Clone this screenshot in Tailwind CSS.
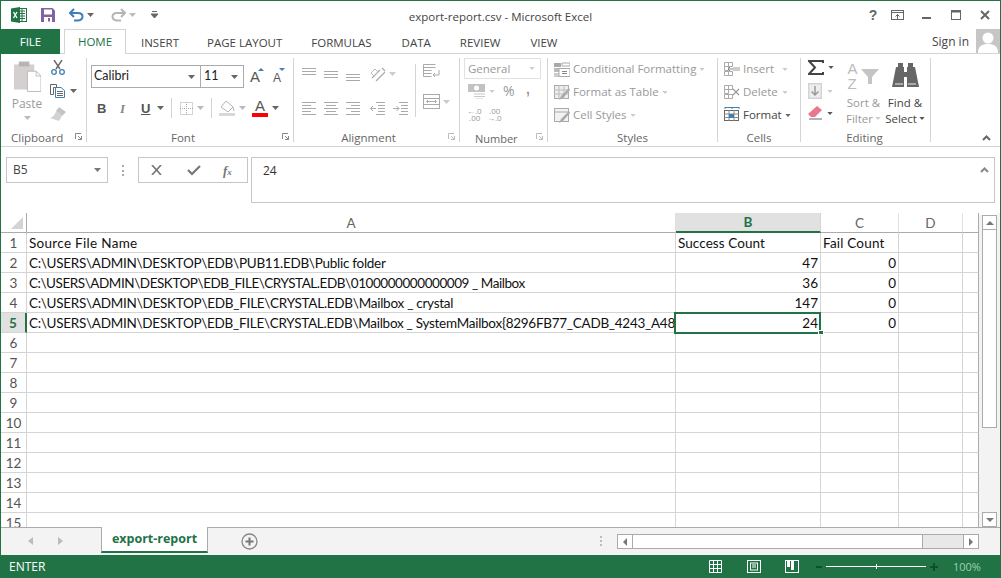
<!DOCTYPE html>
<html><head><meta charset="utf-8"><title>export-report.csv - Microsoft Excel</title>
<script src="https://cdn.jsdelivr.net/npm/@tailwindcss/browser@4"></script></head>
<body class="m-0 overflow-hidden bg-white">
<div class="w-[1001px] h-[578px] flex flex-col overflow-hidden bg-white border-x border-t border-[#217346] font-['Open_Sans',sans-serif] text-[11.5px] text-[#444] leading-none">

<!-- title bar -->
<div class="h-[28px] shrink-0 relative flex items-center">
  <svg class="ml-[10px] w-[16px] h-[16px]" viewBox="0 0 16 16"><rect x="6" y="1.500" width="9.500" height="13" fill="#fff" stroke="#217346"/><path d="M9 4h5M9 6.500h5M9 9h5M9 11.500h5M11 2v12" stroke="#217346" fill="none"/><path d="M0 1.500L9 0v16L0 14.500z" fill="#217346"/><path d="M2.500 5l3.500 6M6 5l-3.500 6" stroke="#fff" stroke-width="1.300" fill="none"/></svg>
  <svg class="ml-[14px] w-[14px] h-[14px]" viewBox="0 0 14 14"><path d="M0 0h11.500L14 2.500V14H0z" fill="#8064a2"/><rect x="3" y="1.500" width="8" height="5" fill="#fff"/><rect x="3" y="9" width="8" height="5" fill="#fff"/><rect x="7" y="10" width="2" height="3.500" fill="#8064a2"/></svg>
  <svg class="ml-[14px] w-[15px] h-[14px]" viewBox="0 0 15 14"><path d="M5 1L1 5l4 4" fill="none" stroke="#3f7fb5" stroke-width="2"/><path d="M1.500 5H9c6 0 6 7 0 7.500H5" fill="none" stroke="#3f7fb5" stroke-width="2"/></svg>
  <svg class="ml-[3px] w-[7px] h-[4px]" viewBox="0 0 7 4"><path d="M0 0h7L3.500 4z" fill="#666"/></svg>
  <svg class="ml-[17px] w-[15px] h-[14px]" viewBox="0 0 15 14"><path d="M10 1l4 4-4 4" fill="none" stroke="#b5b5b5" stroke-width="2"/><path d="M13.500 5H6c-6 0-6 7 0 7.500h4" fill="none" stroke="#b5b5b5" stroke-width="2"/></svg>
  <svg class="ml-[3px] w-[7px] h-[4px]" viewBox="0 0 7 4"><path d="M0 0h7L3.500 4z" fill="#bbb"/></svg>
  <svg class="ml-[15px] w-[7px] h-[8px]" viewBox="0 0 7 8"><path d="M1 .5h5M0 3h7L3.500 7z" stroke="#666" stroke-width="1" fill="#666"/></svg>
  <div class="absolute left-0 w-full text-center text-[11.5px] text-[#444] top-[10px]">export-report.csv - Microsoft Excel</div>
  <div class="ml-auto flex items-center">
    <span class="font-bold text-[14px] text-[#666] w-[10px] text-center font-['Liberation_Sans']">?</span>
    <svg class="ml-[13px] w-[13px] h-[10px]" viewBox="0 0 13 10"><rect x=".5" y=".5" width="12" height="9" fill="none" stroke="#666"/><path d="M.5 2.500h12M6.500 9V4.500M4.500 6.500l2-2 2 2" stroke="#666" fill="none"/></svg>
    <div class="ml-[18px] w-[9px] h-[2px] bg-[#666] mt-[5px]"></div>
    <svg class="ml-[20px] w-[10px] h-[10px]" viewBox="0 0 10 10"><rect x=".5" y=".5" width="9" height="9" fill="none" stroke="#666"/><path d="M0 1.500h10" stroke="#666" stroke-width="2"/></svg>
    <svg class="ml-[19px] mr-[10px] w-[10px] h-[10px]" viewBox="0 0 10 10"><path d="M1 1l8 8M9 1l-8 8" stroke="#666" stroke-width="2"/></svg>
  </div>
</div>

<!-- tabs -->
<div class="h-[25px] shrink-0 flex border-b border-[#d4d4d4] text-[11.5px]">
  <div class="w-[59px] h-[25px] bg-[#217346] text-white flex items-center justify-center">FILE</div>
  <div class="ml-[4px] w-[62px] h-[25px] bg-white border border-b-0 border-[#d4d4d4] text-[#217346] flex items-center justify-center">HOME</div>
  <div class="ml-[15px] pt-[8px]">INSERT</div>
  <div class="ml-[28px] pt-[8px]">PAGE LAYOUT</div>
  <div class="ml-[29px] pt-[8px]">FORMULAS</div>
  <div class="ml-[30px] pt-[8px]">DATA</div>
  <div class="ml-[29px] pt-[8px]">REVIEW</div>
  <div class="ml-[30px] pt-[8px]">VIEW</div>
  <div class="ml-auto pt-[7px] text-[12px]">Sign in</div>
  <svg class="ml-[7px] w-[24px] h-[24px]" viewBox="0 0 24 24"><rect width="24" height="24" fill="#c6c6c6"/><circle cx="12" cy="9" r="5.500" fill="#fff"/><path d="M2 24c0-7 4-9 10-9s10 2 10 9z" fill="#fff"/></svg>
</div>

<!-- ribbon -->
<div class="h-[93px] shrink-0 flex pt-[4px] border-b border-[#d4d4d4] relative">

  <!-- Clipboard -->
  <div class="w-[86px] h-[84px] border-r border-[#d4d4d4] flex flex-col">
    <div class="h-[72px] shrink-0 flex">
      <div class="w-[49px] flex flex-col items-center pl-[3px] text-[#9a9a9a]">
        <svg class="mt-[3px] w-[28px] h-[31px]" viewBox="0 0 29 31"><path d="M1 3h21v26H1z" fill="#d4d0d0"/><rect x="6" y="0" width="11" height="5" fill="#b8b4b4"/><path d="M15 10h9l5 5v16H15z" fill="#fff" stroke="#bbb"/><path d="M24 10v5h5" fill="none" stroke="#bbb"/></svg>
        <span class="mt-[6px] text-[12px]">Paste</span>
        <svg class="mt-[6px] w-[7px] h-[4px]" viewBox="0 0 7 4"><path d="M0 0h7L3.500 4z" fill="#bbb"/></svg>
      </div>
      <div class="flex flex-col">
        <svg class="ml-[1px] mt-[2px] w-[14px] h-[15px]" viewBox="0 0 14 15"><path d="M3 0l6 9M11 0L5 9" stroke="#666" stroke-width="1.400"/><circle cx="3" cy="12" r="2.300" fill="none" stroke="#3f7fb5" stroke-width="1.300"/><circle cx="11" cy="12" r="2.300" fill="none" stroke="#3f7fb5" stroke-width="1.300"/></svg>
        <div class="flex items-center mt-[9px]">
          <svg class="w-[15px] h-[14px]" viewBox="0 0 15 14"><path d="M.5.500h6v3h-3v7h-3z" fill="#fff" stroke="#666"/><path d="M5.500 3.500H11l3.500 3v7h-9z" fill="#fff" stroke="#3f7fb5"/><path d="M7 7.500h6M7 9.500h6M7 11.500h6" stroke="#666"/></svg>
          <svg class="ml-[5px] w-[7px] h-[4px]" viewBox="0 0 7 4"><path d="M0 0h7L3.500 4z" fill="#666"/></svg>
        </div>
        <svg class="mt-[9px] w-[16px] h-[14px]" viewBox="0 0 16 14"><path d="M9 0l7 5-4 4-6-5z" fill="#c4c4c4"/><path d="M6 4l6 5-3 5-9-3c3-1 5-3 6-7z" fill="#d2d2d2"/></svg>
      </div>
    </div>
    <div class="h-[16px] shrink-0 flex items-center relative"><span class="ml-[10px] text-[#666]">Clipboard</span><svg class="absolute left-[74px] top-[3px] w-[7px] h-[7px]" viewBox="0 0 7 7"><path d="M.5 6V.5H6M3 3l3.500 3.500M6.500 3v3.500H3" fill="none" stroke="#888"/></svg></div>
  </div>

  <!-- Font -->
  <div class="w-[207px] h-[84px] border-r border-[#d4d4d4] flex flex-col">
    <div class="h-[72px] shrink-0">
      <div class="flex items-start mt-[7px] ml-[4px] h-[23px]">
        <div class="w-[110px] h-[23px] border border-[#ababab] flex items-center pl-[2px] font-['Lato'] text-[12.5px] text-[#222]">Calibri<svg class="ml-auto mr-[5px] w-[7px] h-[4px]" viewBox="0 0 7 4"><path d="M0 0h7L3.500 4z" fill="#666"/></svg></div>
        <div class="w-[43px] h-[23px] border border-l-0 border-[#ababab] flex items-center pl-[3px] font-['Lato'] text-[12.5px] text-[#222]">11<svg class="ml-auto mr-[5px] w-[7px] h-[4px]" viewBox="0 0 7 4"><path d="M0 0h7L3.500 4z" fill="#666"/></svg></div>
        <div class="ml-[6px] w-[14px] mt-[3px] h-[16px] flex items-end text-[15px] text-[#555] font-['Liberation_Sans'] relative">A<svg class="absolute left-[8px] top-[0px] w-[6px] h-[3px]" viewBox="0 0 6 3"><path d="M0 3h6L3 0z" fill="#3f7fb5"/></svg></div>
        <div class="ml-[9px] w-[11px] mt-[3px] h-[16px] flex items-end text-[12px] text-[#555] font-['Liberation_Sans'] relative">A<svg class="absolute left-[6px] top-[0px] w-[6px] h-[3px]" viewBox="0 0 6 3"><path d="M0 0h6L3 3z" fill="#3f7fb5"/></svg></div>
      </div>
      <div class="flex items-center mt-[10px] h-[20px] text-[#555]">
        <span class="ml-[10px] w-[9px] font-bold text-[13px] font-['Liberation_Sans']">B</span>
        <span class="ml-[14px] w-[8px] italic text-[13px] font-['Liberation_Serif'] font-bold text-[#888]">I</span>
        <span class="ml-[13px] w-[9px] underline font-bold text-[13px] font-['Liberation_Sans']">U</span>
        <svg class="ml-[7px] w-[7px] h-[4px]" viewBox="0 0 7 4"><path d="M0 0h7L3.500 4z" fill="#666"/></svg>
        <div class="ml-[7px] w-px h-[20px] bg-[#d4d4d4]"></div>
        <svg class="ml-[8px] w-[13px] h-[13px]" viewBox="0 0 13 13"><rect x=".5" y=".5" width="12" height="12" fill="none" stroke="#aaa" stroke-dasharray="1 1"/><path d="M6.500 0v13M0 6.500h13" stroke="#aaa" stroke-dasharray="1 1"/></svg>
        <svg class="ml-[4px] w-[7px] h-[4px]" viewBox="0 0 7 4"><path d="M0 0h7L3.500 4z" fill="#bbb"/></svg>
        <div class="ml-[7px] w-px h-[20px] bg-[#d4d4d4]"></div>
        <svg class="ml-[7px] w-[16px] h-[15px]" viewBox="0 0 16 15"><path d="M7 0l7 6-5 5-7-5z" fill="#fff" stroke="#b5b5b5"/><path d="M14 6l1 4" stroke="#b5b5b5"/><rect x="0" y="12" width="16" height="3" fill="#d8d8d8"/></svg>
        <svg class="ml-[4px] w-[7px] h-[4px]" viewBox="0 0 7 4"><path d="M0 0h7L3.500 4z" fill="#bbb"/></svg>
        <div class="ml-[6px] w-[16px] h-[18px] flex flex-col items-center"><span class="text-[15px] leading-[14px] font-['Liberation_Sans'] text-[#555]">A</span><div class="w-[16px] h-[4px] bg-[#f00] mt-[0px]"></div></div>
        <svg class="ml-[4px] w-[7px] h-[4px]" viewBox="0 0 7 4"><path d="M0 0h7L3.500 4z" fill="#666"/></svg>
      </div>
    </div>
    <div class="h-[16px] shrink-0 flex items-center justify-center relative text-[#666]"><span class="pr-[14px]">Font</span><svg class="absolute left-[195px] top-[3px] w-[7px] h-[7px]" viewBox="0 0 7 7"><path d="M.5 6V.5H6M3 3l3.500 3.500M6.500 3v3.500H3" fill="none" stroke="#888"/></svg></div>
  </div>

  <!-- Alignment -->
  <div class="w-[166px] h-[84px] border-r border-[#d4d4d4] flex flex-col">
    <div class="h-[72px] shrink-0 flex">
      <div class="flex flex-col">
        <div class="flex items-center mt-[8px] ml-[8px] h-[16px]">
          <svg class="w-[14px] h-[13px]" viewBox="0 0 14 13"><path d="M0 .5h14M0 3.500h14M0 6.500h14" stroke="#aaa"/></svg>
          <svg class="ml-[8px] w-[14px] h-[13px]" viewBox="0 0 14 13"><path d="M0 3.500h14M0 6.500h14M0 9.500h14" stroke="#aaa"/></svg>
          <svg class="ml-[8px] w-[14px] h-[13px]" viewBox="0 0 14 13"><path d="M0 6.500h14M0 9.500h14M0 12.500h14" stroke="#aaa"/></svg>
          <svg class="ml-[10px] w-[16px] h-[15px]" viewBox="0 0 16 15"><path d="M2 11l8-8M6 14l9-9M12 1l3 3" stroke="#aaa" fill="none" stroke-width="1.200"/><path d="M1 6l4-4 3 3-4 4z" fill="none" stroke="#bbb"/></svg>
          <svg class="ml-[3px] w-[7px] h-[4px]" viewBox="0 0 7 4"><path d="M0 0h7L3.500 4z" fill="#ccc"/></svg>
        </div>
        <div class="flex items-center mt-[18px] ml-[8px] h-[16px]">
          <svg class="w-[14px] h-[13px]" viewBox="0 0 14 13"><path d="M0 .5h14M0 3.500h9M0 6.500h14M0 9.500h9M0 12.500h14" stroke="#aaa"/></svg>
          <svg class="ml-[8px] w-[14px] h-[13px]" viewBox="0 0 14 13"><path d="M0 .5h14M2 3.500h10M0 6.500h14M2 9.500h10M0 12.500h14" stroke="#aaa"/></svg>
          <svg class="ml-[8px] w-[14px] h-[13px]" viewBox="0 0 14 13"><path d="M0 .5h14M5 3.500h9M0 6.500h14M5 9.500h9M0 12.500h14" stroke="#aaa"/></svg>
          <svg class="ml-[10px] w-[15px] h-[13px]" viewBox="0 0 15 13"><path d="M6 .5h9M8 3.500h7M8 6.500h7M8 9.500h7M6 12.500h9M0 6.500h6M3 4L.5 6.500 3 9" stroke="#aaa" fill="none"/></svg>
          <svg class="ml-[8px] w-[15px] h-[13px]" viewBox="0 0 15 13"><path d="M6 .5h9M8 3.500h7M8 6.500h7M8 9.500h7M6 12.500h9M0 6.500h6M3.500 4L6 6.500 3.500 9" stroke="#aaa" fill="none"/></svg>
        </div>
      </div>
      <div class="ml-[7px] mt-[6px] w-px h-[53px] bg-[#d4d4d4]"></div>
      <div class="ml-[7px] flex flex-col">
        <svg class="mt-[6px] w-[17px] h-[18px]" viewBox="0 0 17 18"><path d="M.5.500h12M.5 3.500h12M.500 6.500h8M.5 9.500h8M.5 12.500h8M.5.5v12" stroke="#aaa" fill="none"/><path d="M16 6v5h-6M12 9l-2 2 2 2" stroke="#aaa" fill="none"/></svg>
        <div class="flex items-center mt-[12px]">
          <svg class="w-[17px] h-[15px]" viewBox="0 0 17 15"><rect x=".5" y=".5" width="16" height="14" fill="none" stroke="#aaa"/><path d="M0 4.500h17M0 10.500h17M4 7.500h9M5 6L3.500 7.500 5 9M12 6l1.500 1.500L12 9" stroke="#aaa" fill="none"/></svg>
          <svg class="ml-[3px] w-[7px] h-[4px]" viewBox="0 0 7 4"><path d="M0 0h7L3.500 4z" fill="#ccc"/></svg>
        </div>
      </div>
    </div>
    <div class="h-[16px] shrink-0 flex items-center justify-center relative text-[#666]"><span class="pr-[16px]">Alignment</span><svg class="absolute left-[154px] top-[3px] w-[7px] h-[7px]" viewBox="0 0 7 7"><path d="M.5 6V.5H6M3 3l3.500 3.500M6.500 3v3.500H3" fill="none" stroke="#bbb"/></svg></div>
  </div>

  <!-- Number -->
  <div class="w-[88px] h-[84px] border-r border-[#d4d4d4] flex flex-col">
    <div class="h-[72px] shrink-0 pl-[4px] text-[#999]">
      <div class="w-[77px] h-[21px] border border-[#e1e1e1] flex items-center pl-[3px]">General<svg class="ml-auto mr-[5px] w-[6px] h-[3px]" viewBox="0 0 7 4"><path d="M0 0h7L3.500 4z" fill="#ccc"/></svg></div>
      <div class="flex items-center mt-[4px] h-[16px] pl-[4px]">
        <svg class="w-[17px] h-[15px]" viewBox="0 0 17 15"><rect width="17" height="8" fill="#c2c2c2"/><circle cx="8.500" cy="4" r="2.500" fill="#fff"/><path d="M6 10h11M6 12.500h11M8 15h7" stroke="#c8c8c8"/></svg>
        <svg class="ml-[4px] w-[6px] h-[3px]" viewBox="0 0 7 4"><path d="M0 0h7L3.500 4z" fill="#ccc"/></svg>
        <span class="ml-[8px] text-[14px] w-[14px] text-[#999]">%</span>
        <span class="ml-[9px] font-bold text-[14px] text-[#999] -mt-[5px] font-['Liberation_Sans']">,</span>
      </div>
      <div class="flex items-center mt-[8px] pl-[3px] h-[14px] text-[8px] leading-[7px] text-[#999]">
        <div class="w-[16px]">←.0<br>&nbsp;.00</div>
        <div class="ml-[4px] w-[16px]">&nbsp;.00<br>→.0</div>
      </div>
    </div>
    <div class="h-[16px] shrink-0 flex items-center relative text-[#666]"><span class="ml-[15px] text-[11px]">Number</span><svg class="absolute left-[76px] top-[3px] w-[7px] h-[7px]" viewBox="0 0 7 7"><path d="M.5 6V.5H6M3 3l3.500 3.500M6.500 3v3.500H3" fill="none" stroke="#bbb"/></svg></div>
  </div>

  <!-- Styles -->
  <div class="w-[170px] h-[84px] border-r border-[#d4d4d4] flex flex-col">
    <div class="h-[72px] shrink-0 pl-[6px] text-[#999] text-[11.5px]">
      <div class="flex items-center h-[16px] mt-[3px]"><svg class="w-[16px] h-[15px]" viewBox="0 0 16 15"><rect width="7" height="4" y="1" fill="#aaa"/><rect width="7" height="4" y="6" fill="#bbb"/><rect width="7" height="4" y="11" fill="#ccc"/><path d="M8 1h8v3H8zM5 6.500h11v8H5z" fill="#fff" stroke="#aaa"/><path d="M8 9.500h5M8 11.500h5" stroke="#888"/></svg><span class="ml-[3px]">Conditional Formatting</span><svg class="ml-[3px] w-[6px] h-[3px]" viewBox="0 0 7 4"><path d="M0 0h7L3.500 4z" fill="#ccc"/></svg></div>
      <div class="flex items-center h-[16px] mt-[7px]"><svg class="w-[16px] h-[15px]" viewBox="0 0 16 15"><rect x=".5" y=".5" width="14" height="13" fill="#eee" stroke="#aaa"/><path d="M5 0v14M10 0v14M0 5h15M0 9h15" stroke="#bbb"/><path d="M15 3l-8 8-2 4 4-2 7-8z" fill="#aaa"/></svg><span class="ml-[3px]">Format as Table</span><svg class="ml-[3px] w-[6px] h-[3px]" viewBox="0 0 7 4"><path d="M0 0h7L3.500 4z" fill="#ccc"/></svg></div>
      <div class="flex items-center h-[16px] mt-[7px]"><svg class="w-[16px] h-[15px]" viewBox="0 0 16 15"><rect x=".5" y=".5" width="14" height="13" fill="#f2f2f2" stroke="#aaa"/><path d="M0 4h15" stroke="#aaa"/><path d="M15 3l-8 8-2 4 4-2 7-8z" fill="#aaa"/></svg><span class="ml-[3px]">Cell Styles</span><svg class="ml-[3px] w-[6px] h-[3px]" viewBox="0 0 7 4"><path d="M0 0h7L3.500 4z" fill="#ccc"/></svg></div>
    </div>
    <div class="h-[16px] shrink-0 flex items-center justify-center text-[#666]">Styles</div>
  </div>

  <!-- Cells -->
  <div class="w-[83px] h-[84px] border-r border-[#d4d4d4] flex flex-col">
    <div class="h-[72px] shrink-0 pl-[6px] text-[#999]">
      <div class="flex items-center h-[16px] mt-[3px]"><svg class="w-[16px] h-[15px]" viewBox="0 0 16 15"><path d="M.5.500h4v4h-4zM4.500.5h4v4h-4zM.5 4.500h4v4h-4zM.5 9.500h4v4h-4zM4.500 9.500h4v4h-4z" fill="none" stroke="#aaa"/><path d="M9 5h7v4H9z" fill="#ccc"/><path d="M9 7H4M6 5L4 7l2 2" stroke="#888" fill="none"/></svg><span class="ml-[3px] w-[36px]">Insert</span><svg class="ml-[3px] w-[6px] h-[3px]" viewBox="0 0 7 4"><path d="M0 0h7L3.500 4z" fill="#ccc"/></svg></div>
      <div class="flex items-center h-[16px] mt-[7px]"><svg class="w-[16px] h-[15px]" viewBox="0 0 16 15"><path d="M.5.500h4v4h-4zM4.500.5h4v4h-4zM.5 4.500h4v4h-4zM.5 9.500h4v4h-4zM4.500 9.500h4v4h-4z" fill="none" stroke="#aaa"/><path d="M9 4l6 6M15 4l-6 6" stroke="#999" stroke-width="1.200"/></svg><span class="ml-[3px] w-[36px]">Delete</span><svg class="ml-[3px] w-[6px] h-[3px]" viewBox="0 0 7 4"><path d="M0 0h7L3.500 4z" fill="#ccc"/></svg></div>
      <div class="flex items-center h-[16px] mt-[7px] text-[#444]"><svg class="w-[16px] h-[16px]" viewBox="0 0 16 16"><path d="M1 .5h14M1 0v2M15 0v2M8 0v2" stroke="#3f7fb5"/><rect x=".5" y="3.500" width="14" height="10" fill="#fff" stroke="#666"/><path d="M5 3v11M10 3v11M0 7h15M0 10.500h15" stroke="#888"/><rect x="5" y="7" width="5" height="4" fill="#3f7fb5"/></svg><span class="ml-[3px]">Format</span><svg class="ml-[3px] w-[6px] h-[3px]" viewBox="0 0 7 4"><path d="M0 0h7L3.500 4z" fill="#666"/></svg></div>
    </div>
    <div class="h-[16px] shrink-0 flex items-center justify-center text-[#666]">Cells</div>
  </div>

  <!-- Editing -->
  <div class="w-[130px] h-[84px] border-r border-[#d4d4d4] flex flex-col">
    <div class="h-[72px] shrink-0 flex pl-[7px]">
      <div class="flex flex-col w-[37px]">
        <div class="flex items-center mt-[2px]"><svg class="w-[16px] h-[15px]" viewBox="0 0 16 15"><path d="M15 3V1H1l6 6.500L1 14h14v-2" fill="none" stroke="#444" stroke-width="2"/></svg><svg class="ml-[4px] w-[6px] h-[3px]" viewBox="0 0 7 4"><path d="M0 0h7L3.500 4z" fill="#555"/></svg></div>
        <div class="flex items-center mt-[8px]"><svg class="w-[15px] h-[16px]" viewBox="0 0 15 16"><rect x="0" y="0" width="14" height="16" fill="#d4d4d4"/><rect x="1.500" y="1.500" width="11" height="13" fill="#eee"/><path d="M7 3v9M3.500 8.500L7 12l3.500-3.500" stroke="#999" stroke-width="1.500" fill="none"/></svg><svg class="ml-[4px] w-[6px] h-[3px]" viewBox="0 0 7 4"><path d="M0 0h7L3.500 4z" fill="#ccc"/></svg></div>
        <div class="flex items-center mt-[7px]"><svg class="w-[15px] h-[14px]" viewBox="0 0 15 14"><path d="M9 0l5 4-7 7H3L0 8z" fill="#e8788c"/><path d="M1 13h13" stroke="#666"/></svg><svg class="ml-[4px] w-[6px] h-[3px]" viewBox="0 0 7 4"><path d="M0 0h7L3.500 4z" fill="#555"/></svg></div>
      </div>
      <div class="flex flex-col items-center w-[37px] text-[#999] text-[11.5px]">
        <div class="h-[29px] w-[32px] mt-[3px] relative flex flex-col font-['Liberation_Sans'] text-[15px] leading-[15px] text-[#bbb]"><span>A</span><span>Z</span><svg class="absolute left-[13px] top-[8px] w-[18px] h-[15px]" viewBox="0 0 18 15"><path d="M0 0h18l-7 8v7H7V8z" fill="#c4c4c4"/></svg></div>
        <span class="mt-[7px] whitespace-nowrap">Sort &amp;</span>
        <span class="mt-[4px] whitespace-nowrap flex items-center">Filter<svg class="ml-[2px] w-[6px] h-[3px]" viewBox="0 0 7 4"><path d="M0 0h7L3.500 4z" fill="#ccc"/></svg></span>
      </div>
      <div class="flex flex-col items-center w-[38px] ml-[4px] text-[#444]">
        <svg class="mt-[5px] w-[27px] h-[25px]" viewBox="0 0 27 25"><path d="M6 0h5v4h1v5H15V4h1V0h5v4h2l4 20H15V14h-3v10H0L4 4h2z" fill="#666"/><path d="M3 21h8M16 21h8" stroke="#eee"/></svg>
        <span class="mt-[9px] whitespace-nowrap">Find &amp;</span>
        <span class="mt-[4px] whitespace-nowrap flex items-center">Select<svg class="ml-[2px] w-[6px] h-[3px]" viewBox="0 0 7 4"><path d="M0 0h7L3.500 4z" fill="#555"/></svg></span>
      </div>
    </div>
    <div class="h-[16px] shrink-0 flex items-center justify-center text-[#666]"><span class="pr-[2px]">Editing</span></div>
  </div>
  <svg class="ml-[51px] mt-[77px] w-[9px] h-[6px]" viewBox="0 0 9 6"><path d="M1 5l3.500-3.500L8 5" fill="none" stroke="#666" stroke-width="2"/></svg>
</div>

<!-- formula bar -->
<div class="h-[66px] shrink-0 flex items-start pt-[10px]">
  <div class="ml-[5px] w-[102px] h-[26px] border border-[#c6c6c6] flex items-center pl-[6px] text-[12px] text-[#444]">B5<svg class="ml-auto mr-[6px] w-[7px] h-[4px]" viewBox="0 0 7 4"><path d="M0 0h7L3.500 4z" fill="#777"/></svg></div>
  <div class="ml-[14px] mt-[8px] w-[3px] h-[11px] border-l-[2px] border-dotted border-[#aaa]"></div>
  <div class="ml-[13px] w-[110px] h-[26px] border border-[#c6c6c6] flex items-center text-[#777]">
    <svg class="ml-[12px] w-[11px] h-[10px]" viewBox="0 0 11 10"><path d="M1 0l9 10M10 0L1 10" stroke="#777" stroke-width="1.700"/></svg>
    <svg class="ml-[25px] w-[14px] h-[11px]" viewBox="0 0 14 11"><path d="M1 5l4 4 8-8" stroke="#777" stroke-width="2.200" fill="none"/></svg>
    <span class="ml-[22px] italic text-[13px] font-['Liberation_Serif'] font-bold">f<span class="text-[9px]">x</span></span>
  </div>
  <div class="ml-[3px] w-[744px] h-[46px] border border-[#c6c6c6] flex items-start justify-between pl-[11px] pr-[5px] pt-[7px] text-[12px] text-[#333]"><span>24</span><svg class="mt-[2px] w-[9px] h-[6px]" viewBox="0 0 9 6"><path d="M1 5l3.500-3.500L8 5" fill="none" stroke="#888" stroke-width="2"/></svg></div>
</div>

<!-- sheet -->
<div class="h-[314px] shrink-0 flex relative overflow-hidden">
  <div class="w-[978px] shrink-0 h-[314px] overflow-hidden grid grid-cols-[26px_649px_145px_78px_64px_16px] auto-rows-[20px] font-['Lato'] text-[13.5px] leading-none text-[#111] [&>div]:border-r [&>div]:border-b [&>div]:border-[#d4d4d4] [&>div]:flex [&>div]:items-center [&>div]:pt-[2px] [&>div]:overflow-hidden [&>div]:whitespace-nowrap">
    <div class="!border-b-[#ababab] !border-r-[#ababab] relative"><svg class="absolute left-[10px] top-[4px] w-[12px] h-[12px]" viewBox="0 0 12 12"><path d="M12 0v12H0z" fill="#d4d4d4"/></svg></div>
    <div class="!border-b-[#ababab] justify-center text-[#666] !border-r-[#e1e1e1]">A</div>
    <div class="!border-b-2 !border-b-[#217346] justify-center bg-[#e1e1e1] font-bold text-[#217346]">B</div>
    <div class="!border-b-[#ababab] justify-center text-[#666] !border-r-[#e1e1e1]">C</div>
    <div class="!border-b-[#ababab] justify-center text-[#666] !border-r-[#e1e1e1]">D</div>
    <div class="!border-b-[#ababab] !border-r-[#ababab]"></div>

    <div class="justify-center text-[#555]">1</div><div class="pl-[2px] tracking-[0.3px]">Source File Name</div><div class="pl-[2px] tracking-[0.07px]">Success Count</div><div class="pl-[2px] tracking-[0.2px]">Fail Count</div><div></div><div class="!border-r-[#ababab]"></div>
    <div class="justify-center text-[#555]">2</div><div class="pl-[2px] tracking-[-0.27px]">C:\USERS\ADMIN\DESKTOP\EDB\PUB11.EDB\Public folder</div><div class="justify-end pr-[2px]">47</div><div class="justify-end pr-[2px]">0</div><div></div><div class="!border-r-[#ababab]"></div>
    <div class="justify-center text-[#555]">3</div><div class="pl-[2px] tracking-[-0.44px]">C:\USERS\ADMIN\DESKTOP\EDB_FILE\CRYSTAL.EDB\0100000000000009 _ Mailbox</div><div class="justify-end pr-[2px]">36</div><div class="justify-end pr-[2px]">0</div><div></div><div class="!border-r-[#ababab]"></div>
    <div class="justify-center text-[#555]">4</div><div class="pl-[2px] tracking-[-0.26px]">C:\USERS\ADMIN\DESKTOP\EDB_FILE\CRYSTAL.EDB\Mailbox _ crystal</div><div class="justify-end pr-[2px]">147</div><div class="justify-end pr-[2px]">0</div><div></div><div class="!border-r-[#ababab]"></div>
    <div class="justify-center bg-[#e1e1e1] font-bold text-[#217346] !border-r-2 !border-r-[#217346]">5</div><div class="pl-[2px] tracking-[-0.27px]">C:\USERS\ADMIN\DESKTOP\EDB_FILE\CRYSTAL.EDB\Mailbox _ SystemMailbox{8296FB77_CADB_4243_A48</div><div class="justify-end pr-[2px]">24</div><div class="justify-end pr-[2px]">0</div><div></div><div class="!border-r-[#ababab]"></div>
    <div class="justify-center text-[#555]">6</div><div></div><div></div><div></div><div></div><div class="!border-r-[#ababab]"></div>
    <div class="justify-center text-[#555]">7</div><div></div><div></div><div></div><div></div><div class="!border-r-[#ababab]"></div>
    <div class="justify-center text-[#555]">8</div><div></div><div></div><div></div><div></div><div class="!border-r-[#ababab]"></div>
    <div class="justify-center text-[#555]">9</div><div></div><div></div><div></div><div></div><div class="!border-r-[#ababab]"></div>
    <div class="justify-center text-[#555]">10</div><div></div><div></div><div></div><div></div><div class="!border-r-[#ababab]"></div>
    <div class="justify-center text-[#555]">11</div><div></div><div></div><div></div><div></div><div class="!border-r-[#ababab]"></div>
    <div class="justify-center text-[#555]">12</div><div></div><div></div><div></div><div></div><div class="!border-r-[#ababab]"></div>
    <div class="justify-center text-[#555]">13</div><div></div><div></div><div></div><div></div><div class="!border-r-[#ababab]"></div>
    <div class="justify-center text-[#555]">14</div><div></div><div></div><div></div><div></div><div class="!border-r-[#ababab]"></div>
    <div class="justify-center text-[#555]">15</div><div></div><div></div><div></div><div></div><div class="!border-r-[#ababab]"></div>
  </div>
  <!-- selection -->
  <div class="absolute left-[673px] top-[99px] w-[147px] h-[22px] border-2 border-[#217346] pointer-events-none"></div>
  <div class="absolute left-[817px] top-[117px] w-[6px] h-[5px] bg-[#217346] border border-white pointer-events-none"></div>
  <!-- vertical scrollbar -->
  <div class="flex-1 bg-[#f3f3f3] h-full flex flex-col items-end pr-[3px]">
    <div class="w-full h-[2px] bg-white"></div>
    <div class="w-[15px] h-[15px] bg-white border border-[#ababab] flex items-center justify-center"><svg class="w-[8px] h-[4px]" viewBox="0 0 8 4"><path d="M0 4h8L4 0z" fill="#777"/></svg></div>
    <div class="w-[15px] h-[198px] bg-white border-x border-b border-[#ababab]"></div>
    <div class="flex-1"></div>
    <div class="w-[15px] h-[15px] bg-white border border-[#ababab] flex items-center justify-center"><svg class="w-[8px] h-[4px]" viewBox="0 0 8 4"><path d="M0 0h8L4 4z" fill="#777"/></svg></div>
  </div>
</div>

<!-- sheet tab bar -->
<div class="h-[28px] shrink-0 bg-[#f3f3f3] border-t border-[#ababab] flex items-start relative">
  <svg class="ml-[27px] mt-[9px] w-[5px] h-[8px]" viewBox="0 0 5 8"><path d="M5 0v8L0 4z" fill="#bbb"/></svg>
  <svg class="ml-[25px] mt-[9px] w-[5px] h-[8px]" viewBox="0 0 5 8"><path d="M0 0v8l5-4z" fill="#bbb"/></svg>
  <div class="ml-[38px] -mt-px w-[107px] h-[26px] bg-white border-x border-[#ababab] border-b-2 border-b-[#217346] flex items-center justify-center font-['Open_Sans'] font-bold text-[12.5px] text-[#217346]">export-report</div>
  <svg class="ml-[33px] mt-[5px] w-[17px] h-[17px]" viewBox="0 0 17 17"><circle cx="8.500" cy="8.500" r="7.500" fill="none" stroke="#888" stroke-width="1.300"/><path d="M8.500 4.500v8M4.500 8.500h8" stroke="#777" stroke-width="2"/></svg>
  <div class="ml-[342px] mt-[8px] w-[2px] h-[10px] border-l-2 border-dotted border-[#bbb]"></div>
  <div class="ml-[15px] mt-[6px] w-[362px] h-[15px] border border-[#ababab] flex bg-[#e8e8e8]">
    <div class="w-[15px] h-full bg-white border-r border-[#ababab] flex items-center justify-center"><svg class="w-[4px] h-[8px]" viewBox="0 0 4 8"><path d="M4 0v8L0 4z" fill="#777"/></svg></div>
    <div class="w-[290px] h-full bg-white border-r border-[#ababab]"></div>
    <div class="flex-1"></div>
    <div class="w-[15px] h-full bg-white border-l border-[#ababab] flex items-center justify-center"><svg class="w-[4px] h-[8px]" viewBox="0 0 4 8"><path d="M0 0v8l4-4z" fill="#777"/></svg></div>
  </div>
</div>

<!-- status bar -->
<div class="h-[23px] shrink-0 bg-[#217346] flex items-center text-white text-[12px]">
  <span class="ml-[8px]">ENTER</span>
  <svg class="ml-auto w-[13px] h-[13px]" viewBox="0 0 13 13"><path d="M.5.500h12v12H.5zM4.500 0v13M8.500 0v13M0 4.500h13M0 8.500h13" fill="none" stroke="#fff"/></svg>
  <svg class="ml-[25px] w-[14px] h-[13px]" viewBox="0 0 14 13"><rect x=".5" y=".5" width="13" height="12" fill="none" stroke="#fff"/><rect x="3.500" y="3" width="7" height="7" fill="none" stroke="#fff"/><path d="M5 5h4M5 7h4" stroke="#fff"/></svg>
  <svg class="ml-[24px] w-[14px] h-[13px]" viewBox="0 0 14 13"><rect x=".5" y=".5" width="13" height="12" fill="none" stroke="#fff"/><rect x="2" y="1" width="3" height="6" fill="#fff"/><rect x="6" y="1" width="3" height="9" fill="#fff"/></svg>
  <div class="ml-[17px] w-[6px] h-[2px] bg-[#0e4f2c]"></div>
  <div class="ml-[4px] w-[100px] h-px bg-white relative"><div class="absolute left-[50px] -top-[2px] w-px h-[5px] bg-white"></div></div>
  <svg class="ml-[4px] w-[8px] h-[8px]" viewBox="0 0 8 8"><path d="M0 4h8M4 0v8" stroke="#0e4f2c" stroke-width="2"/></svg>
  <span class="ml-[15px] mr-[20px] w-[27px] whitespace-nowrap text-[#9cd1b3] text-[11px]">100%</span>
</div>
</div>
</body></html>
